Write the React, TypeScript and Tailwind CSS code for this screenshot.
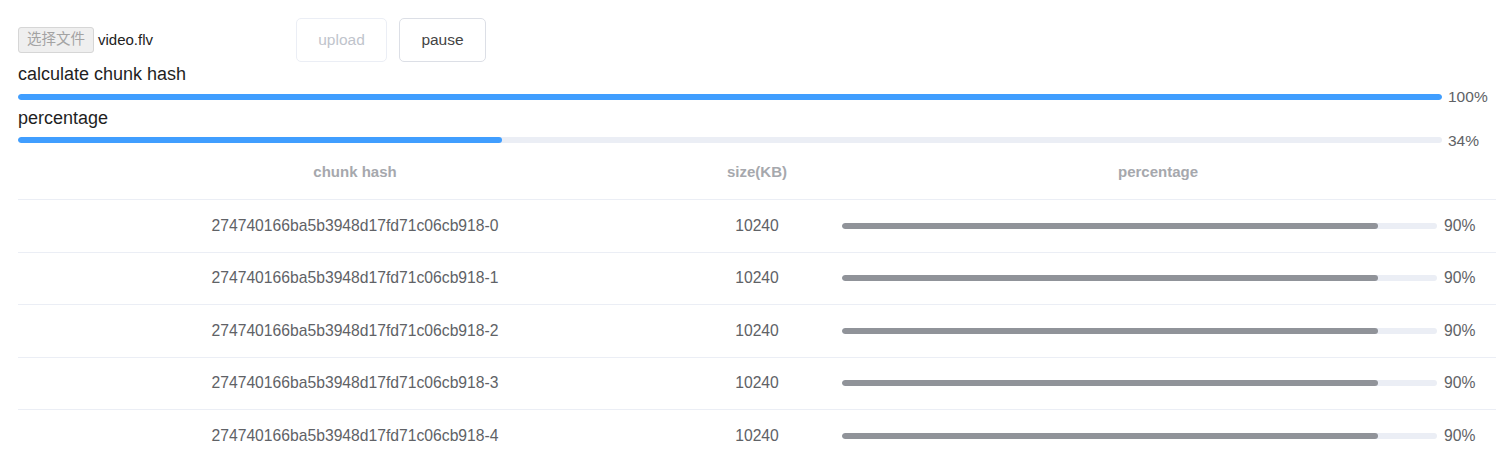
import React from 'react';

const font = { fontFamily: '"Liberation Sans", "Noto Sans CJK SC", sans-serif' };

const chunks = [0, 1, 2, 3, 4].map((i) => ({
  hash: `274740166ba5b3948d17fd71c06cb918-${i}`,
  size: 10240,
  percentage: 90,
}));

const App: React.FC = () => {
  const hashPercentage = 100;
  const uploadPercentage = 34;

  return (
    <div className="w-[1496px] h-[462px] bg-white overflow-hidden pl-[18px]" style={font}>
      {/* Controls */}
      <div className="flex items-center h-[44px] mt-[18px]">
        <div className="flex items-center w-[278px]">
          <span className="h-[26px] w-[76px] flex items-center justify-center bg-[#efefef] border border-[#d6d6d6] rounded-[3px] text-[14.5px] text-[#a3a3a3]">
            选择文件
          </span>
          <span className="ml-[4px] text-[15px] text-[#222]">video.flv</span>
        </div>
        <button
          disabled
          className="w-[91px] h-[44px] rounded-[5px] border border-[#ebeef5] text-[15.5px] text-[#c0c4cc] bg-white"
        >
          upload
        </button>
        <button className="ml-[12px] w-[87px] h-[44px] rounded-[5px] border border-[#dcdfe6] text-[15.5px] text-[#444] bg-white">
          pause
        </button>
      </div>

      {/* Hash progress */}
      <div className="mt-px h-[22px] leading-[22px] text-[18px] text-[#1f1f1f]">calculate chunk hash</div>
      <div className="flex items-center h-[22px] mt-px pr-2">
        <div className="flex-1 h-[6px] rounded-full bg-[#ebeef5] overflow-hidden">
          <div className="h-full rounded-full bg-[#409eff]" style={{ width: `${hashPercentage}%` }} />
        </div>
        <span className="ml-[6px] w-[40px] text-[15.5px] text-[#606266]">{hashPercentage}%</span>
      </div>
      <div className="h-[20px] leading-[20px] text-[18px] text-[#1f1f1f]">percentage</div>
      <div className="flex items-center h-[22px] mt-px pr-2">
        <div className="flex-1 h-[6px] rounded-full bg-[#ebeef5] overflow-hidden">
          <div className="h-full rounded-full bg-[#409eff]" style={{ width: `${uploadPercentage}%` }} />
        </div>
        <span className="ml-[6px] w-[40px] text-[15.5px] text-[#606266] mt-[2px]">{uploadPercentage}%</span>
      </div>

      {/* Chunk table */}
      <div className="w-[1478px]">
        <div className="flex items-center h-[49px] pb-[5px] border-b border-[#ebeef5] text-[15px] font-bold text-[#a6a8ad]">
          <div className="w-[674px] text-center">chunk hash</div>
          <div className="w-[130px] text-center">size(KB)</div>
          <div className="flex-1 text-center pr-[2px]">percentage</div>
        </div>
        {chunks.map((chunk) => (
          <div
            key={chunk.hash}
            className="flex items-center h-[52.5px] border-b border-[#ebeef5] text-[15.7px] text-[#606266]"
          >
            <div className="w-[674px] text-center">{chunk.hash}</div>
            <div className="w-[130px] text-center">{chunk.size}</div>
            <div className="flex-1 flex items-center pl-[20px] pr-[18px]">
              <div className="flex-1 h-[6px] rounded-full bg-[#ebeef5] overflow-hidden">
                <div className="h-full rounded-full bg-[#909399]" style={{ width: `${chunk.percentage}%` }} />
              </div>
              <span className="ml-[7px] w-[34px]">{chunk.percentage}%</span>
            </div>
          </div>
        ))}
      </div>
    </div>
  );
};

export default App;
